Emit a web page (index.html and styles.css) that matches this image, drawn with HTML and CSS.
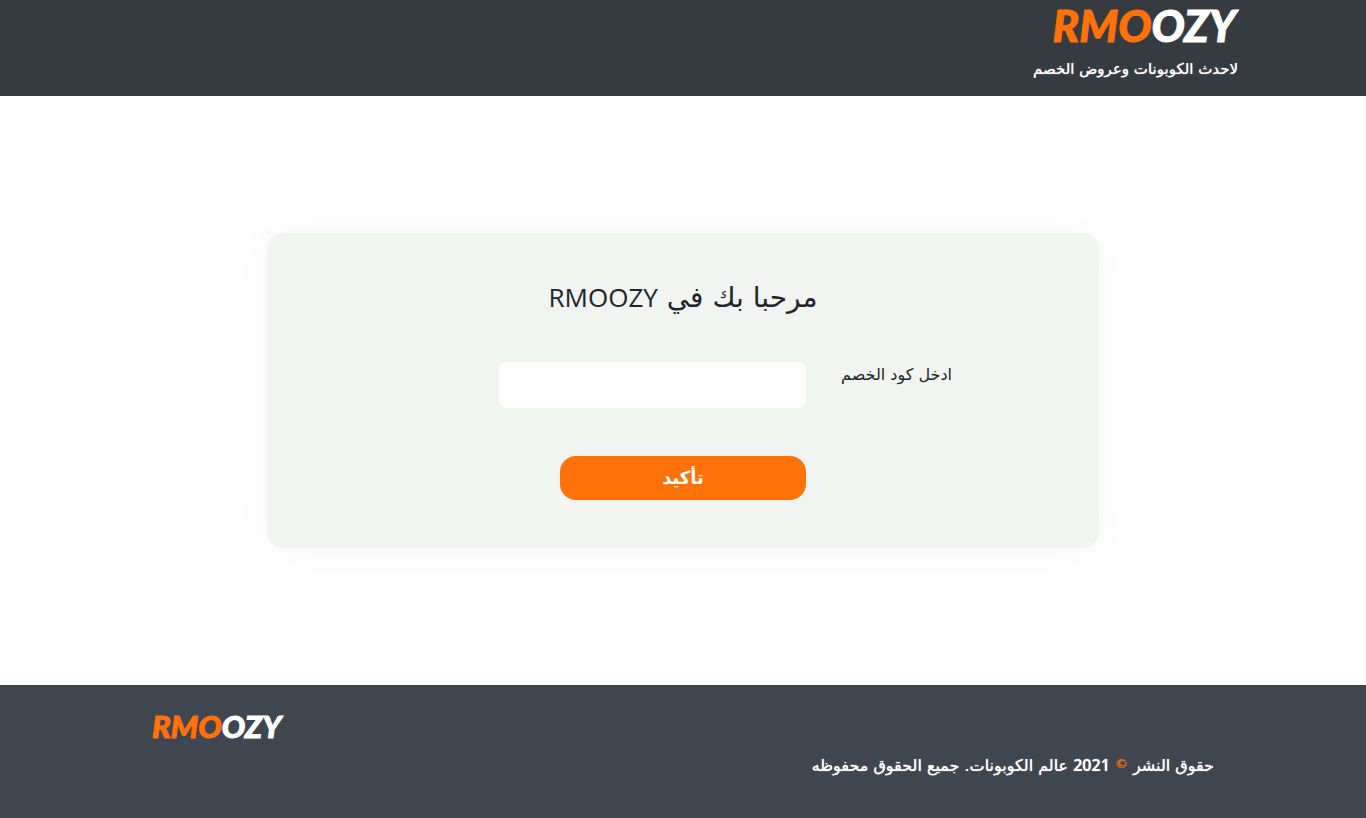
FILE: index.html
```html
<!DOCTYPE html>
<html lang="ar" dir="rtl">
<head>
<meta charset="utf-8">
<meta name="viewport" content="width=device-width, initial-scale=1">
<title>RMOOZY</title>
<link rel="stylesheet" href="styles.css">
</head>
<body>
<header class="header">
  <div class="logo" dir="ltr"><span class="accent">RMO</span>OZY</div>
  <p class="tagline">لاحدث الكوبونات وعروض الخصم</p>
</header>
<main class="main">
  <section class="card">
    <h1 class="title">مرحبا بك في <span class="latin">RMOOZY</span></h1>
    <form class="form">
      <div class="row">
        <label class="label" for="code">ادخل كود الخصم</label>
        <input class="input" id="code" type="text">
      </div>
      <button class="button" type="button">تأكيد</button>
    </form>
  </section>
</main>
<footer class="footer">
  <div class="logo logo-small" dir="ltr"><span class="accent">RMO</span>OZY</div>
  <p class="copyright">حقوق النشر <span class="accent mark">©</span> <span class="latin-bold">2021</span> عالم الكوبونات. جميع الحقوق محفوظه</p>
</footer>
</body>
</html>
```
FILE: styles.css
```css
* { box-sizing: border-box; }
body {
  margin: 0;
  min-height: 100vh;
  display: flex;
  flex-direction: column;
  background: #fff;
  color: #212529;
  font-family: "DejaVu Sans", sans-serif;
}
p, h1 { margin: 0; }
.accent { color: #ff7109; }
.header {
  padding: 0 128px 8px;
  background: #363a41;
  color: #fff;
}
.logo {
  width: fit-content;
  padding-right: 2px;
  font: italic 900 44px/50px Lato, sans-serif;
  -webkit-text-stroke: 1px currentcolor;
}
.tagline {
  font-size: 15px;
  line-height: 38px;
  text-shadow: 0 0 1px currentcolor;
}
.main {
  flex: 1;
  display: flex;
  align-items: center;
  justify-content: center;
  padding: 32px;
}
.card {
  width: 100%;
  max-width: 832px;
  padding: 40px 0 48px;
  border-radius: 16px;
  background: #f1f4f1;
  box-shadow: 0 0 40px rgba(0, 0, 0, 0.04);
}
.title {
  margin-bottom: 40px;
  font-size: 28px;
  font-weight: 400;
  line-height: 48px;
  text-align: center;
}
.latin { font-family: "Open Sans", sans-serif; font-size: 26px; }
.row { display: flex; padding-inline-start: 147px; }
.label {
  width: 146px;
  font-size: 16px;
  line-height: 26px;
}
.input {
  width: 307px;
  height: 46px;
  padding: 8px 12px;
  border: 0;
  border-radius: 8px;
  background: #fff;
  font: inherit;
}
.button {
  display: block;
  width: 246px;
  height: 44px;
  margin: 48px auto 0;
  padding: 0;
  border: 0;
  border-radius: 16px;
  background: #ff7109;
  color: #fff;
  font: 700 18px/44px "DejaVu Sans", sans-serif;
}
.footer {
  padding: 21px 152px 32px;
  background: #3f4650;
  color: #fff;
}
.logo-small {
  margin-right: auto;
  padding-right: 0;
  font-size: 31px;
  line-height: 40px;
}
.copyright {
  font-size: 16px;
  line-height: 40px;
  text-shadow: 0 0 1px currentcolor;
}
.mark { font-size: 13px; line-height: 1; vertical-align: 3px; }
.latin-bold { font: 600 16px/1 "Open Sans", sans-serif; }
```
